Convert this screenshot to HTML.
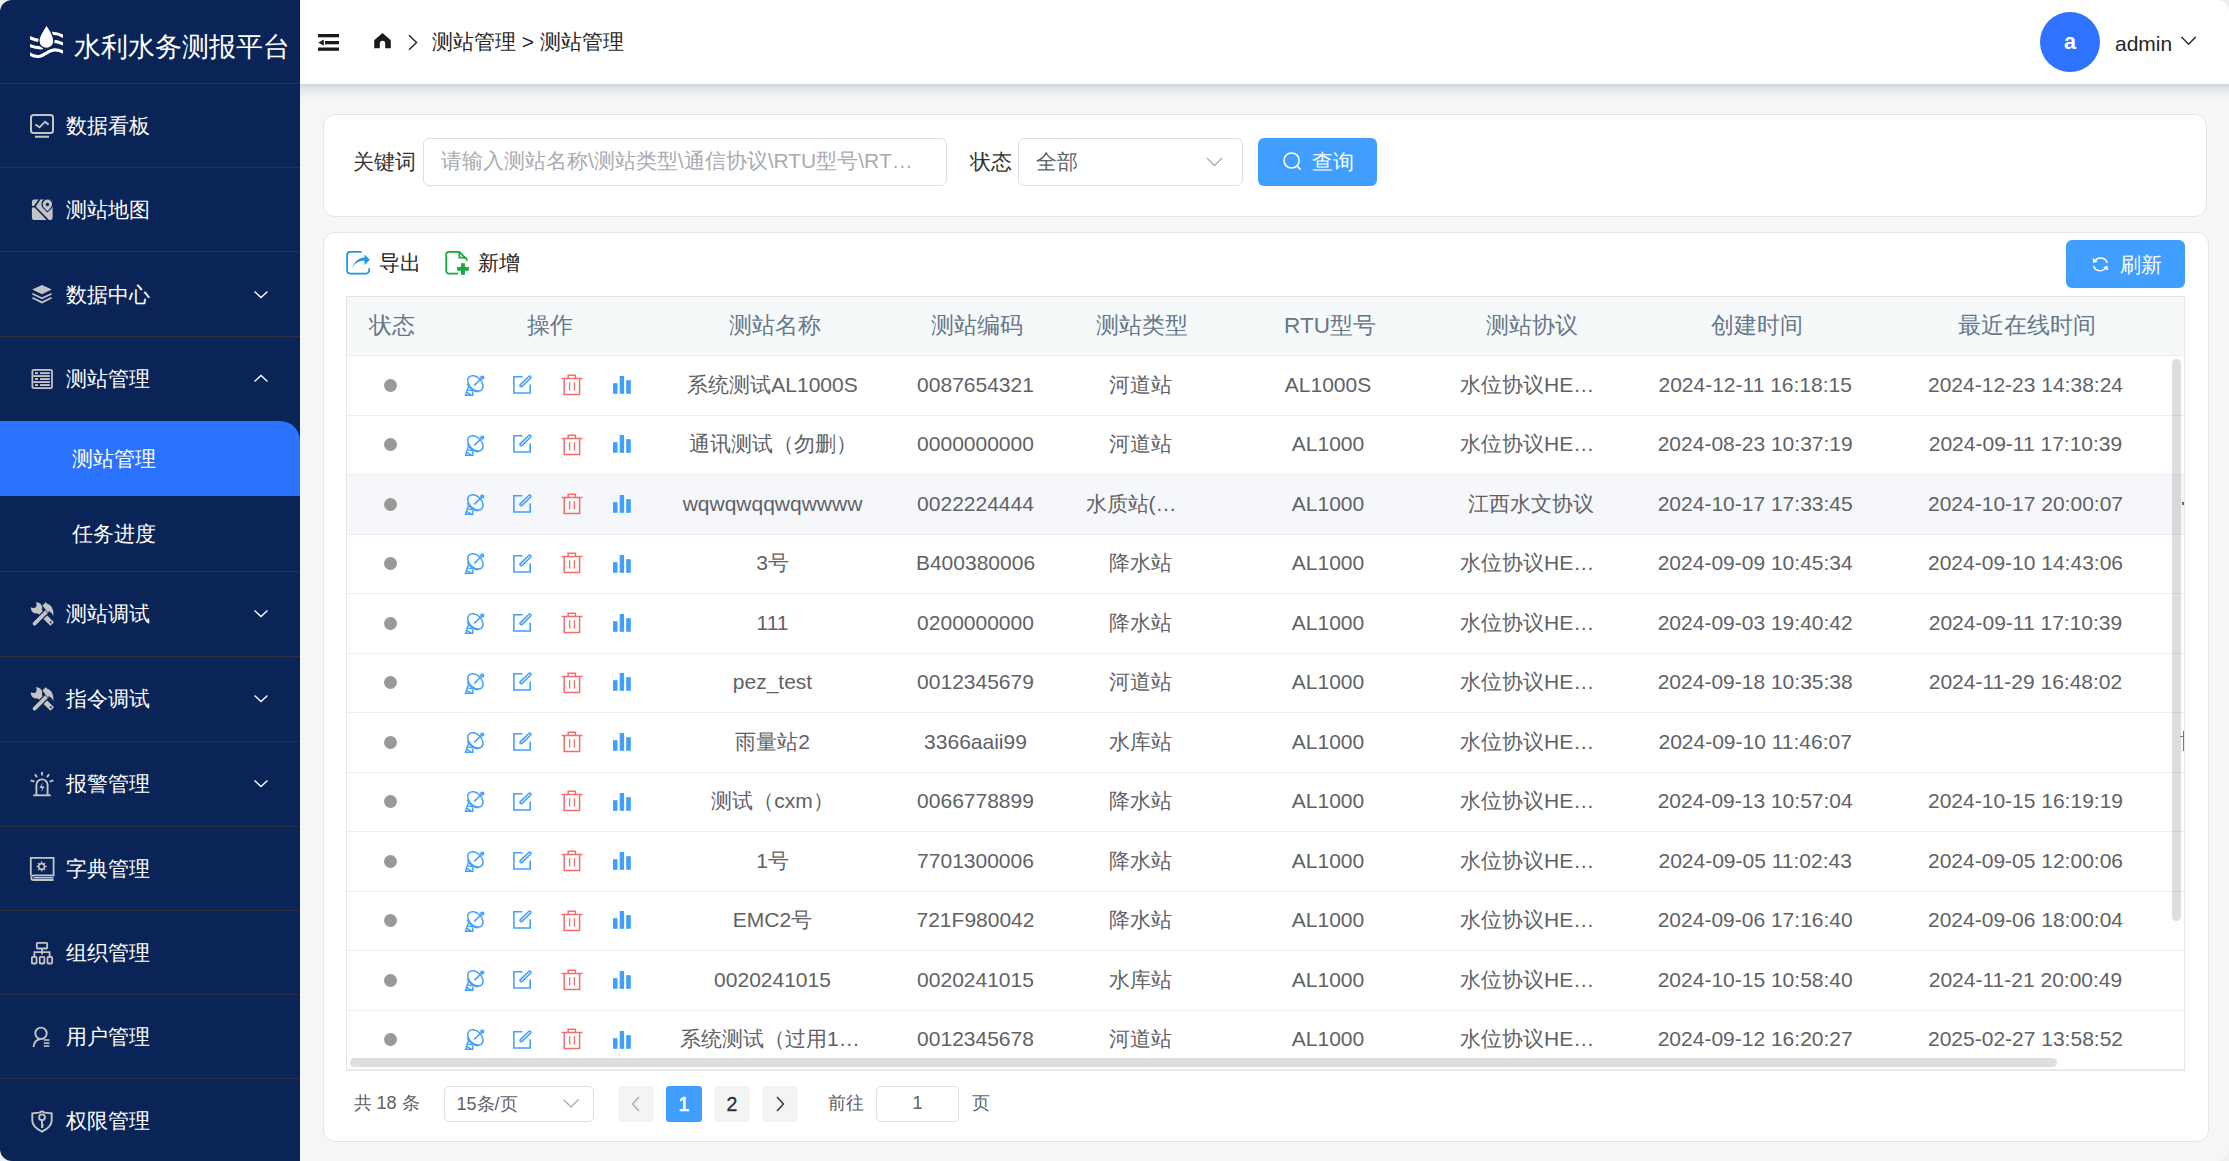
<!DOCTYPE html><html><head><meta charset='utf-8'><style>
html,body{margin:0;padding:0}
body{width:2229px;height:1161px;overflow:hidden;position:relative;background:#eef0f2;font-family:'Liberation Sans',sans-serif;}
</style></head><body>
<div style='position:absolute;left:0;top:0;width:2229px;height:1161px;border-radius:12px;overflow:hidden;background:#f5f6f8'>
<div style='position:absolute;left:0px;top:0px;width:300px;height:1161px;background:#0a2457'></div>
<svg style='position:absolute;left:26px;top:20px' width='44' height='44' viewBox='0 0 44 44'><defs><clipPath id='lc'><rect x='4' y='0' width='33' height='44'/></clipPath></defs>
<g fill='none' stroke='#fff' stroke-width='3.1' clip-path='url(#lc)'>
<path d='M2 16.6 Q 7.5 19.8 14 20.6'/>
<path d='M2 24.6 Q 8.5 28.4 17 27.8'/>
<path d='M2 32.6 C 6 36 10 37.2 14 36.2 C 19 35 23 30 29 29.9 C 32 29.9 35 30.8 39 33.2'/>
<path d='M24 13.4 C 29 12.8 34 14 39 17.4'/>
<path d='M26 21.3 C 30 21.2 34 22.2 39 24.8'/>
</g>
<path d='M20.6 4.6 C 17 10.5 12.9 15 12.9 20.9 A 7.5 7.5 0 0 0 27.9 20.9 C 27.9 15 24.2 10.5 20.6 4.6 Z' fill='#fff' stroke='#0a2457' stroke-width='1.4'/>
</svg>
<div style='position:absolute;left:74px;top:26.5px;height:40px;line-height:40px;font-size:27px;color:#fff;white-space:nowrap;'>水利水务测报平台</div>
<div style='position:absolute;left:0px;top:83px;width:300px;height:1px;background:#2a2f3e'></div>
<div style='position:absolute;left:0px;top:167px;width:300px;height:1px;background:#2a2f3e'></div>
<div style='position:absolute;left:0px;top:251px;width:300px;height:1px;background:#2a2f3e'></div>
<div style='position:absolute;left:0px;top:336px;width:300px;height:1px;background:#2a2f3e'></div>
<div style='position:absolute;left:0px;top:571px;width:300px;height:1px;background:#2a2f3e'></div>
<div style='position:absolute;left:0px;top:656px;width:300px;height:1px;background:#2a2f3e'></div>
<div style='position:absolute;left:0px;top:741px;width:300px;height:1px;background:#2a2f3e'></div>
<div style='position:absolute;left:0px;top:826px;width:300px;height:1px;background:#2a2f3e'></div>
<div style='position:absolute;left:0px;top:910px;width:300px;height:1px;background:#2a2f3e'></div>
<div style='position:absolute;left:0px;top:994px;width:300px;height:1px;background:#2a2f3e'></div>
<div style='position:absolute;left:0px;top:1078px;width:300px;height:1px;background:#2a2f3e'></div>
<div style='position:absolute;left:66px;top:106.0px;height:40px;line-height:40px;font-size:21px;color:#fff;white-space:nowrap;'>数据看板</div>
<div style='position:absolute;left:66px;top:190.0px;height:40px;line-height:40px;font-size:21px;color:#fff;white-space:nowrap;'>测站地图</div>
<div style='position:absolute;left:66px;top:274.5px;height:40px;line-height:40px;font-size:21px;color:#fff;white-space:nowrap;'>数据中心</div>
<svg style='position:absolute;left:253px;top:290px' width='16' height='9' viewBox='0 0 16 9'><path d='M1.5 1.5 L8 7.5 L14.5 1.5' fill='none' stroke='#fff' stroke-width='1.4'/></svg>
<div style='position:absolute;left:66px;top:359.0px;height:40px;line-height:40px;font-size:21px;color:#fff;white-space:nowrap;'>测站管理</div>
<svg style='position:absolute;left:253px;top:374px' width='16' height='9' viewBox='0 0 16 9'><path d='M1.5 7.5 L8 1.5 L14.5 7.5' fill='none' stroke='#fff' stroke-width='1.4'/></svg>
<div style='position:absolute;left:66px;top:594.0px;height:40px;line-height:40px;font-size:21px;color:#fff;white-space:nowrap;'>测站调试</div>
<svg style='position:absolute;left:253px;top:609px' width='16' height='9' viewBox='0 0 16 9'><path d='M1.5 1.5 L8 7.5 L14.5 1.5' fill='none' stroke='#fff' stroke-width='1.4'/></svg>
<div style='position:absolute;left:66px;top:679.0px;height:40px;line-height:40px;font-size:21px;color:#fff;white-space:nowrap;'>指令调试</div>
<svg style='position:absolute;left:253px;top:694px' width='16' height='9' viewBox='0 0 16 9'><path d='M1.5 1.5 L8 7.5 L14.5 1.5' fill='none' stroke='#fff' stroke-width='1.4'/></svg>
<div style='position:absolute;left:66px;top:764.0px;height:40px;line-height:40px;font-size:21px;color:#fff;white-space:nowrap;'>报警管理</div>
<svg style='position:absolute;left:253px;top:779px' width='16' height='9' viewBox='0 0 16 9'><path d='M1.5 1.5 L8 7.5 L14.5 1.5' fill='none' stroke='#fff' stroke-width='1.4'/></svg>
<div style='position:absolute;left:66px;top:848.5px;height:40px;line-height:40px;font-size:21px;color:#fff;white-space:nowrap;'>字典管理</div>
<div style='position:absolute;left:66px;top:932.5px;height:40px;line-height:40px;font-size:21px;color:#fff;white-space:nowrap;'>组织管理</div>
<div style='position:absolute;left:66px;top:1016.5px;height:40px;line-height:40px;font-size:21px;color:#fff;white-space:nowrap;'>用户管理</div>
<div style='position:absolute;left:66px;top:1100.5px;height:40px;line-height:40px;font-size:21px;color:#fff;white-space:nowrap;'>权限管理</div>
<div style='position:absolute;left:0px;top:421px;width:300px;height:75px;background:#2b72ff;border-top-right-radius:20px'></div>
<div style='position:absolute;left:72px;top:439.0px;height:40px;line-height:40px;font-size:21px;color:#fff;white-space:nowrap;'>测站管理</div>
<div style='position:absolute;left:72px;top:514.0px;height:40px;line-height:40px;font-size:21px;color:#fff;white-space:nowrap;'>任务进度</div>
<svg style='position:absolute;left:28px;top:112px' width='28' height='28' viewBox='0 0 28 28'><g fill='none' stroke='#c4c4c4' stroke-width='2'>
<rect x='3' y='3' width='22' height='18' rx='2.5'/>
<path d='M7.4 12.5 L11.5 15.3 L17.1 9.7 L20.6 12.8' stroke-width='1.9'/>
<path d='M7 24.7 H 21' stroke-width='2'/></g></svg>
<svg style='position:absolute;left:30px;top:198px' width='24' height='24' viewBox='0 0 24 24'><rect x='1.9' y='1.6' width='20.7' height='20.4' rx='2.2' fill='#c4c4c4'/>
<path d='M9.8 1 L4.7 8.5 L18.4 22.6' fill='none' stroke='#0a2457' stroke-width='1.6'/>
<path d='M1 9 L4.7 8.5' fill='none' stroke='#0a2457' stroke-width='1.4'/>
<path d='M17.4 14.5 L12.8 10 A 6 6 0 1 1 22 10 Z' fill='#0a2457'/>
<path d='M17.4 13.2 L13.9 9.4 A 4.7 4.7 0 1 1 20.9 9.4 Z' fill='#c4c4c4'/>
<circle cx='17.4' cy='6.5' r='1.7' fill='#0a2457'/></svg>
<svg style='position:absolute;left:30px;top:282px' width='24' height='24' viewBox='0 0 24 24'><path d='M12 3 L21.8 7.6 L12 12.2 L2.2 7.6 Z' fill='#c4c4c4'/>
<path d='M2.4 11.7 L12 16.3 L21.6 11.7 M2.4 15.8 L12 20.4 L21.6 15.8' fill='none' stroke='#c4c4c4' stroke-width='1.8'/></svg>
<svg style='position:absolute;left:30px;top:367px' width='24' height='24' viewBox='0 0 24 24'><g fill='#c4c4c4'><rect x='1.5' y='2' width='21.4' height='20' rx='2.2'/></g>
<rect x='3.3' y='3.8' width='17.8' height='16.4' fill='#0a2457'/>
<g fill='#c4c4c4'>
<rect x='5' y='5.2' width='3' height='1.9'/><rect x='10' y='5.2' width='9.8' height='1.9'/>
<rect x='3.3' y='8.1' width='16.5' height='1.9'/>
<rect x='5' y='11.1' width='3' height='1.9'/><rect x='10' y='11.1' width='9.8' height='1.9'/>
<rect x='3.3' y='14.1' width='16.5' height='1.9'/>
<rect x='5' y='17.1' width='3' height='1.9'/><rect x='10' y='17.1' width='9.8' height='1.9'/>
</g></svg>
<svg style='position:absolute;left:30px;top:601px' width='25' height='25' viewBox='0 0 25 25'><g fill='#c4c4c4'>
<circle cx='6.5' cy='6.9' r='5.7'/>
<path d='M4.6 9.2 L8.4 5.4 L24 21.2 L20.4 24.8 Z'/>
</g>
<circle cx='3.4' cy='3.8' r='3.2' fill='#0a2457'/>
<circle cx='20.7' cy='21.3' r='0.95' fill='#0a2457'/>
<path d='M18.4 8.9 L4.6 22.6' stroke='#0a2457' stroke-width='6.2' stroke-linecap='round'/>
<path d='M18.4 8.9 L4.6 22.6' stroke='#c4c4c4' stroke-width='3.7' stroke-linecap='round'/>
<path d='M12.0 4.5 L15.7 0.9 L17.4 2.5 C 21.6 3.8 24.6 8.2 23.6 16.6 C 22.6 13.4 21 11.4 18.9 10.6 L 17.6 11.8 Z' fill='#c4c4c4' stroke='#0a2457' stroke-width='0.7'/>
</svg>
<svg style='position:absolute;left:30px;top:686px' width='25' height='25' viewBox='0 0 25 25'><g fill='#c4c4c4'>
<circle cx='6.5' cy='6.9' r='5.7'/>
<path d='M4.6 9.2 L8.4 5.4 L24 21.2 L20.4 24.8 Z'/>
</g>
<circle cx='3.4' cy='3.8' r='3.2' fill='#0a2457'/>
<circle cx='20.7' cy='21.3' r='0.95' fill='#0a2457'/>
<path d='M18.4 8.9 L4.6 22.6' stroke='#0a2457' stroke-width='6.2' stroke-linecap='round'/>
<path d='M18.4 8.9 L4.6 22.6' stroke='#c4c4c4' stroke-width='3.7' stroke-linecap='round'/>
<path d='M12.0 4.5 L15.7 0.9 L17.4 2.5 C 21.6 3.8 24.6 8.2 23.6 16.6 C 22.6 13.4 21 11.4 18.9 10.6 L 17.6 11.8 Z' fill='#c4c4c4' stroke='#0a2457' stroke-width='0.7'/>
</svg>
<svg style='position:absolute;left:29px;top:771px' width='26' height='26' viewBox='0 0 26 26'><g fill='none' stroke='#c4c4c4' stroke-width='1.9'>
<path d='M7.4 24 V 14 A 5.6 5.6 0 0 1 18.6 14 V 24'/>
<path d='M4.2 24.3 H 21.8'/>
<path d='M13 1 V 4.5 M6 3.2 L8 6.3 M20 3.2 L18 6.3 M1.6 9.4 L5.4 10.6 M24.4 9.4 L20.6 10.6'/>
</g><path d='M13.8 11.5 L10.4 17 H 13.2 L12.2 21 L15.6 15.6 H 12.8 Z' fill='#c4c4c4'/></svg>
<svg style='position:absolute;left:29px;top:856px' width='26' height='26' viewBox='0 0 26 26'><g fill='none' stroke='#c4c4c4' stroke-width='1.8'>
<path d='M1.8 19.5 V 1.9 H 24.6 V 19.4 H 4.6 A 2.3 2.3 0 0 0 4.6 24 H 24.6'/>
<path d='M4.6 21.7 H 24.6' stroke-width='1.6'/>
<circle cx='12.6' cy='10.5' r='2.9' stroke-width='1.6'/>
<path d='M12.6 5.6 V 7 M12.6 14 V 15.4 M7.7 10.5 H 9.1 M16.1 10.5 H 17.5 M9.1 7 L10 7.9 M15.2 13.1 L16.1 14 M16.1 7 L15.2 7.9 M10 13.1 L9.1 14' stroke-width='1.3'/>
</g></svg>
<svg style='position:absolute;left:30px;top:941px' width='24' height='24' viewBox='0 0 24 24'><g fill='none' stroke='#c4c4c4' stroke-width='1.8'>
<rect x='6.8' y='1.9' width='10.4' height='5.6' rx='0.8'/>
<path d='M12 7.5 V 13.5 M4.4 16.5 V 11.2 H 19.6 V 16.5'/>
<rect x='1.9' y='15.9' width='4.6' height='6.6' rx='0.8'/>
<rect x='9.7' y='15.9' width='4.6' height='6.6' rx='0.8'/>
<rect x='17.5' y='15.9' width='4.6' height='6.6' rx='0.8'/>
</g></svg>
<svg style='position:absolute;left:30px;top:1025px' width='24' height='24' viewBox='0 0 24 24'><g fill='none' stroke='#c4c4c4' stroke-width='1.9'>
<circle cx='11' cy='8.3' r='5.7'/>
<path d='M3.5 22 C 4 17.5 6.5 14.5 10.2 14'/>
</g><g fill='#c4c4c4'><rect x='13.8' y='14.2' width='5.6' height='1.6'/><rect x='13.8' y='17.3' width='5.6' height='1.6'/><rect x='13.8' y='20.2' width='5.6' height='1.6'/></g></svg>
<svg style='position:absolute;left:30px;top:1109px' width='24' height='24' viewBox='0 0 24 24'><g fill='none' stroke='#c4c4c4' stroke-width='1.9'>
<path d='M12 2.3 L14.8 3.6 L21.7 4.4 V 11.5 C 21.7 16.8 16.8 20.3 12 22.6 C 7.2 20.3 2.3 16.8 2.3 11.5 V 4.4 L9.2 3.6 Z'/>
<circle cx='12' cy='8.3' r='2.9'/>
<path d='M12 11.2 V 19'/><path d='M12 15.6 L13.6 16.3 M12 18 L13.3 17.5' stroke-width='1.5'/>
</g></svg>
<div style='position:absolute;left:300px;top:0px;width:1929px;height:84px;background:#fff'></div>
<div style='position:absolute;left:300px;top:84px;width:1929px;height:15px;background:linear-gradient(#d3d7db,#e2e5e8 35%,#f5f6f8)'></div>
<svg style='position:absolute;left:318px;top:33px' width='22' height='19' viewBox='0 0 22 19'><g fill='#1a1a1a'><rect x='0' y='1' width='21' height='3.3'/><rect x='7' y='8' width='14' height='3.3'/><rect x='0' y='14.5' width='21' height='3.3'/>
<path d='M0.3 9.6 L5.8 6.4 V 12.8 Z'/></g></svg>
<svg style='position:absolute;left:373px;top:32px' width='19' height='18' viewBox='0 0 19 18'><path d='M9.5 1 L17.8 8.2 V 16.3 H 12.2 V 11.5 A 2.7 2.7 0 0 0 6.8 11.5 V 16.3 H 1.2 V 8.2 Z' fill='#1a1a1a'/></svg>
<svg style='position:absolute;left:407px;top:34px' width='12' height='17' viewBox='0 0 12 17'><path d='M2 1.2 L9.5 8.5 L2 15.8' fill='none' stroke='#2a2a2a' stroke-width='1.5'/></svg>
<div style='position:absolute;left:432px;top:22.1px;height:40px;line-height:40px;font-size:21px;color:#262626;white-space:nowrap;'>测站管理 &gt; 测站管理</div>
<div style='position:absolute;left:2040px;top:12px;width:60px;height:60px;background:#2d73ff;border-radius:50%'></div>
<div style='position:absolute;left:2040.0px;top:22.0px;width:60px;height:40px;line-height:40px;text-align:center;font-size:21.5px;color:#fff;white-space:nowrap;font-weight:bold'>a</div>
<div style='position:absolute;left:2115px;top:24.0px;height:40px;line-height:40px;font-size:21px;color:#262626;white-space:nowrap;'>admin</div>
<svg style='position:absolute;left:2180px;top:35px' width='18' height='12' viewBox='0 0 18 12'><path d='M1.5 2 L8.6 9.2 L15.7 2' fill='none' stroke='#2a2a2a' stroke-width='1.5'/></svg>
<div style='position:absolute;left:323px;top:114px;width:1884px;height:103px;background:#fff;border:1px solid #e5e5e6;border-radius:12px;box-sizing:border-box'></div>
<div style='position:absolute;left:353px;top:142.3px;height:40px;line-height:40px;font-size:21px;color:#303133;white-space:nowrap;'>关键词</div>
<div style='position:absolute;left:423px;top:138px;width:524px;height:48px;border:1px solid #dcdfe6;border-radius:6px;box-sizing:border-box;background:#fff'></div>
<div style='position:absolute;left:441px;top:141.1px;height:40px;line-height:40px;font-size:21px;color:#a8abb2;white-space:nowrap;'>请输入测站名称\测站类型\通信协议\RTU型号\RT…</div>
<div style='position:absolute;left:970px;top:141.5px;height:40px;line-height:40px;font-size:21px;color:#303133;white-space:nowrap;'>状态</div>
<div style='position:absolute;left:1018px;top:138px;width:225px;height:48px;border:1px solid #dcdfe6;border-radius:6px;box-sizing:border-box;background:#fff'></div>
<div style='position:absolute;left:1036px;top:141.5px;height:40px;line-height:40px;font-size:21px;color:#606266;white-space:nowrap;'>全部</div>
<svg style='position:absolute;left:1205px;top:155px' width='19' height='13' viewBox='0 0 19 13'><path d='M2 3 L9.5 10.5 L17 3' fill='none' stroke='#a8abb2' stroke-width='1.3'/></svg>
<div style='position:absolute;left:1258px;top:138px;width:119px;height:48px;background:#409eff;border-radius:6px'></div>
<svg style='position:absolute;left:1281px;top:150px' width='22' height='22' viewBox='0 0 22 22'><circle cx='10.6' cy='10.5' r='7.6' fill='none' stroke='#fff' stroke-width='1.5'/><path d='M16 16 L19.6 19.6' stroke='#fff' stroke-width='1.6'/></svg>
<div style='position:absolute;left:1312px;top:141.5px;height:40px;line-height:40px;font-size:21px;color:#fff;white-space:nowrap;'>查询</div>
<div style='position:absolute;left:323px;top:232px;width:1886px;height:910px;background:#fff;border:1px solid #e5e5e6;border-radius:12px;box-sizing:border-box'></div>
<svg style='position:absolute;left:345px;top:250px' width='26' height='26' viewBox='0 0 26 26'><path d='M16.7 1.9 H 5 A 3 3 0 0 0 2.1 4.9 V 20.6 A 3 3 0 0 0 5 23.6 H 21.2 A 3 3 0 0 0 24.2 20.6 V 18.2' fill='none' stroke='#1b9ae6' stroke-width='1.8'/>
<path d='M7.2 17.9 C 9 12.5 13 8 19.5 7.6 V 4.4 L 24.8 9.8 L 19.5 15.1 V 10.7 C 14 10.5 10 13 7.2 17.9 Z' fill='#1b9ae6'/></svg>
<div style='position:absolute;left:379px;top:243.0px;height:40px;line-height:40px;font-size:21px;color:#262626;white-space:nowrap;'>导出</div>
<svg style='position:absolute;left:444px;top:250px' width='26' height='26' viewBox='0 0 26 26'><g fill='none' stroke='#17ab3d' stroke-width='1.8'>
<path d='M14.1 23.6 H 5 A 2.8 2.8 0 0 1 2.2 20.8 V 4.7 A 2.8 2.8 0 0 1 5 1.9 H 15.3 L 22.9 9.5 V 10.7'/>
<path d='M15.3 2 V 7.6 H 22.4' stroke-width='1.7'/>
</g><g fill='#17ab3d'><rect x='17' y='13.2' width='3.9' height='11.6'/><rect x='13.1' y='17' width='11.7' height='3.75'/></g></svg>
<div style='position:absolute;left:478px;top:243.0px;height:40px;line-height:40px;font-size:21px;color:#262626;white-space:nowrap;'>新增</div>
<div style='position:absolute;left:2066px;top:240px;width:119px;height:48px;background:#409eff;border-radius:6px'></div>
<svg style='position:absolute;left:2090px;top:254px' width='21' height='21' viewBox='0 0 21 21'><g fill='none' stroke='#fff' stroke-width='1.5'>
<path d='M4.5 7.6 A 6.9 6.9 0 0 1 17.2 8.8'/><path d='M16.3 12.8 A 6.9 6.9 0 0 1 3.5 12'/></g>
<path d='M2.6 4 L3.2 9 L7.8 7.4 Z M18 16.5 L17.5 11.6 L13 13.4 Z' fill='#fff'/></svg>
<div style='position:absolute;left:2120px;top:245.0px;height:40px;line-height:40px;font-size:21px;color:#fff;white-space:nowrap;'>刷新</div>
<div style='position:absolute;left:346px;top:296px;width:1839px;height:775px;border:1px solid #e5e5e5;border-bottom:none;box-sizing:border-box;background:#fff'></div>
<div style='position:absolute;left:347px;top:297px;width:1837px;height:58px;background:#f6f9f9'></div>
<div style='position:absolute;left:347px;top:355px;width:1837px;height:1px;background:#ebeef5'></div>
<div style='position:absolute;left:262.0px;top:305.5px;width:260px;height:40px;line-height:40px;text-align:center;font-size:22.5px;color:#66788a;white-space:nowrap;'>状态</div>
<div style='position:absolute;left:419.79999999999995px;top:305.5px;width:260px;height:40px;line-height:40px;text-align:center;font-size:22.5px;color:#66788a;white-space:nowrap;'>操作</div>
<div style='position:absolute;left:644.5px;top:305.5px;width:260px;height:40px;line-height:40px;text-align:center;font-size:22.5px;color:#66788a;white-space:nowrap;'>测站名称</div>
<div style='position:absolute;left:846.9px;top:305.5px;width:260px;height:40px;line-height:40px;text-align:center;font-size:22.5px;color:#66788a;white-space:nowrap;'>测站编码</div>
<div style='position:absolute;left:1012.0px;top:305.5px;width:260px;height:40px;line-height:40px;text-align:center;font-size:22.5px;color:#66788a;white-space:nowrap;'>测站类型</div>
<div style='position:absolute;left:1200.0px;top:305.5px;width:260px;height:40px;line-height:40px;text-align:center;font-size:22.5px;color:#66788a;white-space:nowrap;'>RTU型号</div>
<div style='position:absolute;left:1402.0px;top:305.5px;width:260px;height:40px;line-height:40px;text-align:center;font-size:22.5px;color:#66788a;white-space:nowrap;'>测站协议</div>
<div style='position:absolute;left:1626.7px;top:305.5px;width:260px;height:40px;line-height:40px;text-align:center;font-size:22.5px;color:#66788a;white-space:nowrap;'>创建时间</div>
<div style='position:absolute;left:1897.0px;top:305.5px;width:260px;height:40px;line-height:40px;text-align:center;font-size:22.5px;color:#66788a;white-space:nowrap;'>最近在线时间</div>
<div style='position:absolute;left:347px;top:415px;width:1837px;height:1px;background:#ebeef5'></div>
<div style='position:absolute;left:384px;top:378.9px;width:13px;height:13.0px;background:#999;border-radius:50%'></div>
<svg style='position:absolute;left:464px;top:374px' width='22' height='23' viewBox='0 0 22 23'><g fill='none' stroke='#409eff' stroke-width='1.5'>
<ellipse cx='11.4' cy='9.4' rx='9' ry='6.1' transform='rotate(45 11.4 9.4)'/>
<path d='M3.4 9.8 C 4.6 13.6 9 17.6 14.6 17.8' stroke-width='1.4'/>
<path d='M10.3 11.4 L16.8 5'/><circle cx='18.3' cy='3.6' r='1.3' stroke-width='1.7'/>
<path d='M4.3 12.8 L1.5 21.2 H 8.8 V 17.8 M3.4 15.9 L 9.4 16.9 M 2.8 18.4 L 7.2 21' stroke-width='1.4'/>
</g></svg>
<svg style='position:absolute;left:512px;top:375px' width='21' height='21' viewBox='0 0 21 21'><g fill='none' stroke='#409eff' stroke-width='1.55'>
<path d='M10.5 1.8 H 1.9 V 17.9 H 18.2 V 9.5'/>
<rect x='6.4' y='5.25' width='14.1' height='2.4' rx='1.2' transform='rotate(-44 13.45 6.45)' stroke-width='1.5'/>
</g></svg>
<svg style='position:absolute;left:561px;top:374px' width='22' height='22' viewBox='0 0 22 22'><g fill='none' stroke='#f56c6c' stroke-width='1.5'>
<path d='M0.6 4.5 H 21.4'/><path d='M7.2 4.3 V 1.3 H 14.4 V 4.3'/>
<path d='M3.2 4.5 V 20.6 H 18.6 V 4.5'/>
<path d='M8.6 8.2 V 16.4 M13.4 8.2 V 16.4' stroke-width='1.3'/>
</g></svg>
<svg style='position:absolute;left:612px;top:375px' width='20' height='20' viewBox='0 0 20 20'><g fill='#409eff'><rect x='1' y='8.2' width='4.5' height='10.6'/><rect x='7.7' y='1' width='4.4' height='17.8'/><rect x='14.2' y='5.2' width='4.6' height='13.6'/></g></svg>
<div style='position:absolute;left:632.5px;top:364.7px;width:280px;height:40px;line-height:40px;text-align:center;font-size:21px;color:#606266;white-space:nowrap;'>系统测试AL1000S</div>
<div style='position:absolute;left:835.5px;top:364.7px;width:280px;height:40px;line-height:40px;text-align:center;font-size:21px;color:#606266;white-space:nowrap;'>0087654321</div>
<div style='position:absolute;left:1000.5px;top:364.7px;width:280px;height:40px;line-height:40px;text-align:center;font-size:21px;color:#606266;white-space:nowrap;'>河道站</div>
<div style='position:absolute;left:1188.0px;top:364.7px;width:280px;height:40px;line-height:40px;text-align:center;font-size:21px;color:#606266;white-space:nowrap;'>AL1000S</div>
<div style='position:absolute;left:1460px;top:364.7px;height:40px;line-height:40px;font-size:21px;color:#606266;white-space:nowrap;'>水位协议HE…</div>
<div style='position:absolute;left:1615.2px;top:364.7px;width:280px;height:40px;line-height:40px;text-align:center;font-size:21px;color:#606266;white-space:nowrap;'>2024-12-11 16:18:15</div>
<div style='position:absolute;left:1885.5px;top:364.7px;width:280px;height:40px;line-height:40px;text-align:center;font-size:21px;color:#606266;white-space:nowrap;'>2024-12-23 14:38:24</div>
<div style='position:absolute;left:347px;top:474px;width:1837px;height:1px;background:#ebeef5'></div>
<div style='position:absolute;left:384px;top:438.4px;width:13px;height:13.0px;background:#999;border-radius:50%'></div>
<svg style='position:absolute;left:464px;top:434px' width='22' height='23' viewBox='0 0 22 23'><g fill='none' stroke='#409eff' stroke-width='1.5'>
<ellipse cx='11.4' cy='9.4' rx='9' ry='6.1' transform='rotate(45 11.4 9.4)'/>
<path d='M3.4 9.8 C 4.6 13.6 9 17.6 14.6 17.8' stroke-width='1.4'/>
<path d='M10.3 11.4 L16.8 5'/><circle cx='18.3' cy='3.6' r='1.3' stroke-width='1.7'/>
<path d='M4.3 12.8 L1.5 21.2 H 8.8 V 17.8 M3.4 15.9 L 9.4 16.9 M 2.8 18.4 L 7.2 21' stroke-width='1.4'/>
</g></svg>
<svg style='position:absolute;left:512px;top:434px' width='21' height='21' viewBox='0 0 21 21'><g fill='none' stroke='#409eff' stroke-width='1.55'>
<path d='M10.5 1.8 H 1.9 V 17.9 H 18.2 V 9.5'/>
<rect x='6.4' y='5.25' width='14.1' height='2.4' rx='1.2' transform='rotate(-44 13.45 6.45)' stroke-width='1.5'/>
</g></svg>
<svg style='position:absolute;left:561px;top:434px' width='22' height='22' viewBox='0 0 22 22'><g fill='none' stroke='#f56c6c' stroke-width='1.5'>
<path d='M0.6 4.5 H 21.4'/><path d='M7.2 4.3 V 1.3 H 14.4 V 4.3'/>
<path d='M3.2 4.5 V 20.6 H 18.6 V 4.5'/>
<path d='M8.6 8.2 V 16.4 M13.4 8.2 V 16.4' stroke-width='1.3'/>
</g></svg>
<svg style='position:absolute;left:612px;top:434px' width='20' height='20' viewBox='0 0 20 20'><g fill='#409eff'><rect x='1' y='8.2' width='4.5' height='10.6'/><rect x='7.7' y='1' width='4.4' height='17.8'/><rect x='14.2' y='5.2' width='4.6' height='13.6'/></g></svg>
<div style='position:absolute;left:632.5px;top:424.2px;width:280px;height:40px;line-height:40px;text-align:center;font-size:21px;color:#606266;white-space:nowrap;'>通讯测试（勿删）</div>
<div style='position:absolute;left:835.5px;top:424.2px;width:280px;height:40px;line-height:40px;text-align:center;font-size:21px;color:#606266;white-space:nowrap;'>0000000000</div>
<div style='position:absolute;left:1000.5px;top:424.2px;width:280px;height:40px;line-height:40px;text-align:center;font-size:21px;color:#606266;white-space:nowrap;'>河道站</div>
<div style='position:absolute;left:1188.0px;top:424.2px;width:280px;height:40px;line-height:40px;text-align:center;font-size:21px;color:#606266;white-space:nowrap;'>AL1000</div>
<div style='position:absolute;left:1460px;top:424.2px;height:40px;line-height:40px;font-size:21px;color:#606266;white-space:nowrap;'>水位协议HE…</div>
<div style='position:absolute;left:1615.2px;top:424.2px;width:280px;height:40px;line-height:40px;text-align:center;font-size:21px;color:#606266;white-space:nowrap;'>2024-08-23 10:37:19</div>
<div style='position:absolute;left:1885.5px;top:424.2px;width:280px;height:40px;line-height:40px;text-align:center;font-size:21px;color:#606266;white-space:nowrap;'>2024-09-11 17:10:39</div>
<div style='position:absolute;left:347px;top:475px;width:1837px;height:59px;background:#f5f7fa'></div>
<div style='position:absolute;left:347px;top:534px;width:1837px;height:1px;background:#ebeef5'></div>
<div style='position:absolute;left:384px;top:497.9px;width:13px;height:13.0px;background:#999;border-radius:50%'></div>
<svg style='position:absolute;left:464px;top:493px' width='22' height='23' viewBox='0 0 22 23'><g fill='none' stroke='#409eff' stroke-width='1.5'>
<ellipse cx='11.4' cy='9.4' rx='9' ry='6.1' transform='rotate(45 11.4 9.4)'/>
<path d='M3.4 9.8 C 4.6 13.6 9 17.6 14.6 17.8' stroke-width='1.4'/>
<path d='M10.3 11.4 L16.8 5'/><circle cx='18.3' cy='3.6' r='1.3' stroke-width='1.7'/>
<path d='M4.3 12.8 L1.5 21.2 H 8.8 V 17.8 M3.4 15.9 L 9.4 16.9 M 2.8 18.4 L 7.2 21' stroke-width='1.4'/>
</g></svg>
<svg style='position:absolute;left:512px;top:494px' width='21' height='21' viewBox='0 0 21 21'><g fill='none' stroke='#409eff' stroke-width='1.55'>
<path d='M10.5 1.8 H 1.9 V 17.9 H 18.2 V 9.5'/>
<rect x='6.4' y='5.25' width='14.1' height='2.4' rx='1.2' transform='rotate(-44 13.45 6.45)' stroke-width='1.5'/>
</g></svg>
<svg style='position:absolute;left:561px;top:493px' width='22' height='22' viewBox='0 0 22 22'><g fill='none' stroke='#f56c6c' stroke-width='1.5'>
<path d='M0.6 4.5 H 21.4'/><path d='M7.2 4.3 V 1.3 H 14.4 V 4.3'/>
<path d='M3.2 4.5 V 20.6 H 18.6 V 4.5'/>
<path d='M8.6 8.2 V 16.4 M13.4 8.2 V 16.4' stroke-width='1.3'/>
</g></svg>
<svg style='position:absolute;left:612px;top:494px' width='20' height='20' viewBox='0 0 20 20'><g fill='#409eff'><rect x='1' y='8.2' width='4.5' height='10.6'/><rect x='7.7' y='1' width='4.4' height='17.8'/><rect x='14.2' y='5.2' width='4.6' height='13.6'/></g></svg>
<div style='position:absolute;left:632.5px;top:483.7px;width:280px;height:40px;line-height:40px;text-align:center;font-size:21px;color:#606266;white-space:nowrap;'>wqwqwqqwqwwww</div>
<div style='position:absolute;left:835.5px;top:483.7px;width:280px;height:40px;line-height:40px;text-align:center;font-size:21px;color:#606266;white-space:nowrap;'>0022224444</div>
<div style='position:absolute;left:1085.5px;top:483.7px;height:40px;line-height:40px;font-size:21px;color:#606266;white-space:nowrap;'>水质站(…</div>
<div style='position:absolute;left:1188.0px;top:483.7px;width:280px;height:40px;line-height:40px;text-align:center;font-size:21px;color:#606266;white-space:nowrap;'>AL1000</div>
<div style='position:absolute;left:1390.5px;top:483.7px;width:280px;height:40px;line-height:40px;text-align:center;font-size:21px;color:#606266;white-space:nowrap;'>江西水文协议</div>
<div style='position:absolute;left:1615.2px;top:483.7px;width:280px;height:40px;line-height:40px;text-align:center;font-size:21px;color:#606266;white-space:nowrap;'>2024-10-17 17:33:45</div>
<div style='position:absolute;left:1885.5px;top:483.7px;width:280px;height:40px;line-height:40px;text-align:center;font-size:21px;color:#606266;white-space:nowrap;'>2024-10-17 20:00:07</div>
<div style='position:absolute;left:347px;top:593px;width:1837px;height:1px;background:#ebeef5'></div>
<div style='position:absolute;left:384px;top:557.4px;width:13px;height:13.0px;background:#999;border-radius:50%'></div>
<svg style='position:absolute;left:464px;top:552px' width='22' height='23' viewBox='0 0 22 23'><g fill='none' stroke='#409eff' stroke-width='1.5'>
<ellipse cx='11.4' cy='9.4' rx='9' ry='6.1' transform='rotate(45 11.4 9.4)'/>
<path d='M3.4 9.8 C 4.6 13.6 9 17.6 14.6 17.8' stroke-width='1.4'/>
<path d='M10.3 11.4 L16.8 5'/><circle cx='18.3' cy='3.6' r='1.3' stroke-width='1.7'/>
<path d='M4.3 12.8 L1.5 21.2 H 8.8 V 17.8 M3.4 15.9 L 9.4 16.9 M 2.8 18.4 L 7.2 21' stroke-width='1.4'/>
</g></svg>
<svg style='position:absolute;left:512px;top:554px' width='21' height='21' viewBox='0 0 21 21'><g fill='none' stroke='#409eff' stroke-width='1.55'>
<path d='M10.5 1.8 H 1.9 V 17.9 H 18.2 V 9.5'/>
<rect x='6.4' y='5.25' width='14.1' height='2.4' rx='1.2' transform='rotate(-44 13.45 6.45)' stroke-width='1.5'/>
</g></svg>
<svg style='position:absolute;left:561px;top:552px' width='22' height='22' viewBox='0 0 22 22'><g fill='none' stroke='#f56c6c' stroke-width='1.5'>
<path d='M0.6 4.5 H 21.4'/><path d='M7.2 4.3 V 1.3 H 14.4 V 4.3'/>
<path d='M3.2 4.5 V 20.6 H 18.6 V 4.5'/>
<path d='M8.6 8.2 V 16.4 M13.4 8.2 V 16.4' stroke-width='1.3'/>
</g></svg>
<svg style='position:absolute;left:612px;top:554px' width='20' height='20' viewBox='0 0 20 20'><g fill='#409eff'><rect x='1' y='8.2' width='4.5' height='10.6'/><rect x='7.7' y='1' width='4.4' height='17.8'/><rect x='14.2' y='5.2' width='4.6' height='13.6'/></g></svg>
<div style='position:absolute;left:632.5px;top:543.2px;width:280px;height:40px;line-height:40px;text-align:center;font-size:21px;color:#606266;white-space:nowrap;'>3号</div>
<div style='position:absolute;left:835.5px;top:543.2px;width:280px;height:40px;line-height:40px;text-align:center;font-size:21px;color:#606266;white-space:nowrap;'>B400380006</div>
<div style='position:absolute;left:1000.5px;top:543.2px;width:280px;height:40px;line-height:40px;text-align:center;font-size:21px;color:#606266;white-space:nowrap;'>降水站</div>
<div style='position:absolute;left:1188.0px;top:543.2px;width:280px;height:40px;line-height:40px;text-align:center;font-size:21px;color:#606266;white-space:nowrap;'>AL1000</div>
<div style='position:absolute;left:1460px;top:543.2px;height:40px;line-height:40px;font-size:21px;color:#606266;white-space:nowrap;'>水位协议HE…</div>
<div style='position:absolute;left:1615.2px;top:543.2px;width:280px;height:40px;line-height:40px;text-align:center;font-size:21px;color:#606266;white-space:nowrap;'>2024-09-09 10:45:34</div>
<div style='position:absolute;left:1885.5px;top:543.2px;width:280px;height:40px;line-height:40px;text-align:center;font-size:21px;color:#606266;white-space:nowrap;'>2024-09-10 14:43:06</div>
<div style='position:absolute;left:347px;top:653px;width:1837px;height:1px;background:#ebeef5'></div>
<div style='position:absolute;left:384px;top:616.9px;width:13px;height:13.0px;background:#999;border-radius:50%'></div>
<svg style='position:absolute;left:464px;top:612px' width='22' height='23' viewBox='0 0 22 23'><g fill='none' stroke='#409eff' stroke-width='1.5'>
<ellipse cx='11.4' cy='9.4' rx='9' ry='6.1' transform='rotate(45 11.4 9.4)'/>
<path d='M3.4 9.8 C 4.6 13.6 9 17.6 14.6 17.8' stroke-width='1.4'/>
<path d='M10.3 11.4 L16.8 5'/><circle cx='18.3' cy='3.6' r='1.3' stroke-width='1.7'/>
<path d='M4.3 12.8 L1.5 21.2 H 8.8 V 17.8 M3.4 15.9 L 9.4 16.9 M 2.8 18.4 L 7.2 21' stroke-width='1.4'/>
</g></svg>
<svg style='position:absolute;left:512px;top:613px' width='21' height='21' viewBox='0 0 21 21'><g fill='none' stroke='#409eff' stroke-width='1.55'>
<path d='M10.5 1.8 H 1.9 V 17.9 H 18.2 V 9.5'/>
<rect x='6.4' y='5.25' width='14.1' height='2.4' rx='1.2' transform='rotate(-44 13.45 6.45)' stroke-width='1.5'/>
</g></svg>
<svg style='position:absolute;left:561px;top:612px' width='22' height='22' viewBox='0 0 22 22'><g fill='none' stroke='#f56c6c' stroke-width='1.5'>
<path d='M0.6 4.5 H 21.4'/><path d='M7.2 4.3 V 1.3 H 14.4 V 4.3'/>
<path d='M3.2 4.5 V 20.6 H 18.6 V 4.5'/>
<path d='M8.6 8.2 V 16.4 M13.4 8.2 V 16.4' stroke-width='1.3'/>
</g></svg>
<svg style='position:absolute;left:612px;top:613px' width='20' height='20' viewBox='0 0 20 20'><g fill='#409eff'><rect x='1' y='8.2' width='4.5' height='10.6'/><rect x='7.7' y='1' width='4.4' height='17.8'/><rect x='14.2' y='5.2' width='4.6' height='13.6'/></g></svg>
<div style='position:absolute;left:632.5px;top:602.7px;width:280px;height:40px;line-height:40px;text-align:center;font-size:21px;color:#606266;white-space:nowrap;'>111</div>
<div style='position:absolute;left:835.5px;top:602.7px;width:280px;height:40px;line-height:40px;text-align:center;font-size:21px;color:#606266;white-space:nowrap;'>0200000000</div>
<div style='position:absolute;left:1000.5px;top:602.7px;width:280px;height:40px;line-height:40px;text-align:center;font-size:21px;color:#606266;white-space:nowrap;'>降水站</div>
<div style='position:absolute;left:1188.0px;top:602.7px;width:280px;height:40px;line-height:40px;text-align:center;font-size:21px;color:#606266;white-space:nowrap;'>AL1000</div>
<div style='position:absolute;left:1460px;top:602.7px;height:40px;line-height:40px;font-size:21px;color:#606266;white-space:nowrap;'>水位协议HE…</div>
<div style='position:absolute;left:1615.2px;top:602.7px;width:280px;height:40px;line-height:40px;text-align:center;font-size:21px;color:#606266;white-space:nowrap;'>2024-09-03 19:40:42</div>
<div style='position:absolute;left:1885.5px;top:602.7px;width:280px;height:40px;line-height:40px;text-align:center;font-size:21px;color:#606266;white-space:nowrap;'>2024-09-11 17:10:39</div>
<div style='position:absolute;left:347px;top:712px;width:1837px;height:1px;background:#ebeef5'></div>
<div style='position:absolute;left:384px;top:676.4px;width:13px;height:13.0px;background:#999;border-radius:50%'></div>
<svg style='position:absolute;left:464px;top:672px' width='22' height='23' viewBox='0 0 22 23'><g fill='none' stroke='#409eff' stroke-width='1.5'>
<ellipse cx='11.4' cy='9.4' rx='9' ry='6.1' transform='rotate(45 11.4 9.4)'/>
<path d='M3.4 9.8 C 4.6 13.6 9 17.6 14.6 17.8' stroke-width='1.4'/>
<path d='M10.3 11.4 L16.8 5'/><circle cx='18.3' cy='3.6' r='1.3' stroke-width='1.7'/>
<path d='M4.3 12.8 L1.5 21.2 H 8.8 V 17.8 M3.4 15.9 L 9.4 16.9 M 2.8 18.4 L 7.2 21' stroke-width='1.4'/>
</g></svg>
<svg style='position:absolute;left:512px;top:672px' width='21' height='21' viewBox='0 0 21 21'><g fill='none' stroke='#409eff' stroke-width='1.55'>
<path d='M10.5 1.8 H 1.9 V 17.9 H 18.2 V 9.5'/>
<rect x='6.4' y='5.25' width='14.1' height='2.4' rx='1.2' transform='rotate(-44 13.45 6.45)' stroke-width='1.5'/>
</g></svg>
<svg style='position:absolute;left:561px;top:672px' width='22' height='22' viewBox='0 0 22 22'><g fill='none' stroke='#f56c6c' stroke-width='1.5'>
<path d='M0.6 4.5 H 21.4'/><path d='M7.2 4.3 V 1.3 H 14.4 V 4.3'/>
<path d='M3.2 4.5 V 20.6 H 18.6 V 4.5'/>
<path d='M8.6 8.2 V 16.4 M13.4 8.2 V 16.4' stroke-width='1.3'/>
</g></svg>
<svg style='position:absolute;left:612px;top:672px' width='20' height='20' viewBox='0 0 20 20'><g fill='#409eff'><rect x='1' y='8.2' width='4.5' height='10.6'/><rect x='7.7' y='1' width='4.4' height='17.8'/><rect x='14.2' y='5.2' width='4.6' height='13.6'/></g></svg>
<div style='position:absolute;left:632.5px;top:662.2px;width:280px;height:40px;line-height:40px;text-align:center;font-size:21px;color:#606266;white-space:nowrap;'>pez_test</div>
<div style='position:absolute;left:835.5px;top:662.2px;width:280px;height:40px;line-height:40px;text-align:center;font-size:21px;color:#606266;white-space:nowrap;'>0012345679</div>
<div style='position:absolute;left:1000.5px;top:662.2px;width:280px;height:40px;line-height:40px;text-align:center;font-size:21px;color:#606266;white-space:nowrap;'>河道站</div>
<div style='position:absolute;left:1188.0px;top:662.2px;width:280px;height:40px;line-height:40px;text-align:center;font-size:21px;color:#606266;white-space:nowrap;'>AL1000</div>
<div style='position:absolute;left:1460px;top:662.2px;height:40px;line-height:40px;font-size:21px;color:#606266;white-space:nowrap;'>水位协议HE…</div>
<div style='position:absolute;left:1615.2px;top:662.2px;width:280px;height:40px;line-height:40px;text-align:center;font-size:21px;color:#606266;white-space:nowrap;'>2024-09-18 10:35:38</div>
<div style='position:absolute;left:1885.5px;top:662.2px;width:280px;height:40px;line-height:40px;text-align:center;font-size:21px;color:#606266;white-space:nowrap;'>2024-11-29 16:48:02</div>
<div style='position:absolute;left:347px;top:772px;width:1837px;height:1px;background:#ebeef5'></div>
<div style='position:absolute;left:384px;top:735.9px;width:13px;height:13.0px;background:#999;border-radius:50%'></div>
<svg style='position:absolute;left:464px;top:731px' width='22' height='23' viewBox='0 0 22 23'><g fill='none' stroke='#409eff' stroke-width='1.5'>
<ellipse cx='11.4' cy='9.4' rx='9' ry='6.1' transform='rotate(45 11.4 9.4)'/>
<path d='M3.4 9.8 C 4.6 13.6 9 17.6 14.6 17.8' stroke-width='1.4'/>
<path d='M10.3 11.4 L16.8 5'/><circle cx='18.3' cy='3.6' r='1.3' stroke-width='1.7'/>
<path d='M4.3 12.8 L1.5 21.2 H 8.8 V 17.8 M3.4 15.9 L 9.4 16.9 M 2.8 18.4 L 7.2 21' stroke-width='1.4'/>
</g></svg>
<svg style='position:absolute;left:512px;top:732px' width='21' height='21' viewBox='0 0 21 21'><g fill='none' stroke='#409eff' stroke-width='1.55'>
<path d='M10.5 1.8 H 1.9 V 17.9 H 18.2 V 9.5'/>
<rect x='6.4' y='5.25' width='14.1' height='2.4' rx='1.2' transform='rotate(-44 13.45 6.45)' stroke-width='1.5'/>
</g></svg>
<svg style='position:absolute;left:561px;top:731px' width='22' height='22' viewBox='0 0 22 22'><g fill='none' stroke='#f56c6c' stroke-width='1.5'>
<path d='M0.6 4.5 H 21.4'/><path d='M7.2 4.3 V 1.3 H 14.4 V 4.3'/>
<path d='M3.2 4.5 V 20.6 H 18.6 V 4.5'/>
<path d='M8.6 8.2 V 16.4 M13.4 8.2 V 16.4' stroke-width='1.3'/>
</g></svg>
<svg style='position:absolute;left:612px;top:732px' width='20' height='20' viewBox='0 0 20 20'><g fill='#409eff'><rect x='1' y='8.2' width='4.5' height='10.6'/><rect x='7.7' y='1' width='4.4' height='17.8'/><rect x='14.2' y='5.2' width='4.6' height='13.6'/></g></svg>
<div style='position:absolute;left:632.5px;top:721.7px;width:280px;height:40px;line-height:40px;text-align:center;font-size:21px;color:#606266;white-space:nowrap;'>雨量站2</div>
<div style='position:absolute;left:835.5px;top:721.7px;width:280px;height:40px;line-height:40px;text-align:center;font-size:21px;color:#606266;white-space:nowrap;'>3366aaii99</div>
<div style='position:absolute;left:1000.5px;top:721.7px;width:280px;height:40px;line-height:40px;text-align:center;font-size:21px;color:#606266;white-space:nowrap;'>水库站</div>
<div style='position:absolute;left:1188.0px;top:721.7px;width:280px;height:40px;line-height:40px;text-align:center;font-size:21px;color:#606266;white-space:nowrap;'>AL1000</div>
<div style='position:absolute;left:1460px;top:721.7px;height:40px;line-height:40px;font-size:21px;color:#606266;white-space:nowrap;'>水位协议HE…</div>
<div style='position:absolute;left:1615.2px;top:721.7px;width:280px;height:40px;line-height:40px;text-align:center;font-size:21px;color:#606266;white-space:nowrap;'>2024-09-10 11:46:07</div>
<div style='position:absolute;left:347px;top:831px;width:1837px;height:1px;background:#ebeef5'></div>
<div style='position:absolute;left:384px;top:795.4px;width:13px;height:13.0px;background:#999;border-radius:50%'></div>
<svg style='position:absolute;left:464px;top:790px' width='22' height='23' viewBox='0 0 22 23'><g fill='none' stroke='#409eff' stroke-width='1.5'>
<ellipse cx='11.4' cy='9.4' rx='9' ry='6.1' transform='rotate(45 11.4 9.4)'/>
<path d='M3.4 9.8 C 4.6 13.6 9 17.6 14.6 17.8' stroke-width='1.4'/>
<path d='M10.3 11.4 L16.8 5'/><circle cx='18.3' cy='3.6' r='1.3' stroke-width='1.7'/>
<path d='M4.3 12.8 L1.5 21.2 H 8.8 V 17.8 M3.4 15.9 L 9.4 16.9 M 2.8 18.4 L 7.2 21' stroke-width='1.4'/>
</g></svg>
<svg style='position:absolute;left:512px;top:792px' width='21' height='21' viewBox='0 0 21 21'><g fill='none' stroke='#409eff' stroke-width='1.55'>
<path d='M10.5 1.8 H 1.9 V 17.9 H 18.2 V 9.5'/>
<rect x='6.4' y='5.25' width='14.1' height='2.4' rx='1.2' transform='rotate(-44 13.45 6.45)' stroke-width='1.5'/>
</g></svg>
<svg style='position:absolute;left:561px;top:790px' width='22' height='22' viewBox='0 0 22 22'><g fill='none' stroke='#f56c6c' stroke-width='1.5'>
<path d='M0.6 4.5 H 21.4'/><path d='M7.2 4.3 V 1.3 H 14.4 V 4.3'/>
<path d='M3.2 4.5 V 20.6 H 18.6 V 4.5'/>
<path d='M8.6 8.2 V 16.4 M13.4 8.2 V 16.4' stroke-width='1.3'/>
</g></svg>
<svg style='position:absolute;left:612px;top:792px' width='20' height='20' viewBox='0 0 20 20'><g fill='#409eff'><rect x='1' y='8.2' width='4.5' height='10.6'/><rect x='7.7' y='1' width='4.4' height='17.8'/><rect x='14.2' y='5.2' width='4.6' height='13.6'/></g></svg>
<div style='position:absolute;left:632.5px;top:781.2px;width:280px;height:40px;line-height:40px;text-align:center;font-size:21px;color:#606266;white-space:nowrap;'>测试（cxm）</div>
<div style='position:absolute;left:835.5px;top:781.2px;width:280px;height:40px;line-height:40px;text-align:center;font-size:21px;color:#606266;white-space:nowrap;'>0066778899</div>
<div style='position:absolute;left:1000.5px;top:781.2px;width:280px;height:40px;line-height:40px;text-align:center;font-size:21px;color:#606266;white-space:nowrap;'>降水站</div>
<div style='position:absolute;left:1188.0px;top:781.2px;width:280px;height:40px;line-height:40px;text-align:center;font-size:21px;color:#606266;white-space:nowrap;'>AL1000</div>
<div style='position:absolute;left:1460px;top:781.2px;height:40px;line-height:40px;font-size:21px;color:#606266;white-space:nowrap;'>水位协议HE…</div>
<div style='position:absolute;left:1615.2px;top:781.2px;width:280px;height:40px;line-height:40px;text-align:center;font-size:21px;color:#606266;white-space:nowrap;'>2024-09-13 10:57:04</div>
<div style='position:absolute;left:1885.5px;top:781.2px;width:280px;height:40px;line-height:40px;text-align:center;font-size:21px;color:#606266;white-space:nowrap;'>2024-10-15 16:19:19</div>
<div style='position:absolute;left:347px;top:891px;width:1837px;height:1px;background:#ebeef5'></div>
<div style='position:absolute;left:384px;top:854.9px;width:13px;height:13.0px;background:#999;border-radius:50%'></div>
<svg style='position:absolute;left:464px;top:850px' width='22' height='23' viewBox='0 0 22 23'><g fill='none' stroke='#409eff' stroke-width='1.5'>
<ellipse cx='11.4' cy='9.4' rx='9' ry='6.1' transform='rotate(45 11.4 9.4)'/>
<path d='M3.4 9.8 C 4.6 13.6 9 17.6 14.6 17.8' stroke-width='1.4'/>
<path d='M10.3 11.4 L16.8 5'/><circle cx='18.3' cy='3.6' r='1.3' stroke-width='1.7'/>
<path d='M4.3 12.8 L1.5 21.2 H 8.8 V 17.8 M3.4 15.9 L 9.4 16.9 M 2.8 18.4 L 7.2 21' stroke-width='1.4'/>
</g></svg>
<svg style='position:absolute;left:512px;top:851px' width='21' height='21' viewBox='0 0 21 21'><g fill='none' stroke='#409eff' stroke-width='1.55'>
<path d='M10.5 1.8 H 1.9 V 17.9 H 18.2 V 9.5'/>
<rect x='6.4' y='5.25' width='14.1' height='2.4' rx='1.2' transform='rotate(-44 13.45 6.45)' stroke-width='1.5'/>
</g></svg>
<svg style='position:absolute;left:561px;top:850px' width='22' height='22' viewBox='0 0 22 22'><g fill='none' stroke='#f56c6c' stroke-width='1.5'>
<path d='M0.6 4.5 H 21.4'/><path d='M7.2 4.3 V 1.3 H 14.4 V 4.3'/>
<path d='M3.2 4.5 V 20.6 H 18.6 V 4.5'/>
<path d='M8.6 8.2 V 16.4 M13.4 8.2 V 16.4' stroke-width='1.3'/>
</g></svg>
<svg style='position:absolute;left:612px;top:851px' width='20' height='20' viewBox='0 0 20 20'><g fill='#409eff'><rect x='1' y='8.2' width='4.5' height='10.6'/><rect x='7.7' y='1' width='4.4' height='17.8'/><rect x='14.2' y='5.2' width='4.6' height='13.6'/></g></svg>
<div style='position:absolute;left:632.5px;top:840.7px;width:280px;height:40px;line-height:40px;text-align:center;font-size:21px;color:#606266;white-space:nowrap;'>1号</div>
<div style='position:absolute;left:835.5px;top:840.7px;width:280px;height:40px;line-height:40px;text-align:center;font-size:21px;color:#606266;white-space:nowrap;'>7701300006</div>
<div style='position:absolute;left:1000.5px;top:840.7px;width:280px;height:40px;line-height:40px;text-align:center;font-size:21px;color:#606266;white-space:nowrap;'>降水站</div>
<div style='position:absolute;left:1188.0px;top:840.7px;width:280px;height:40px;line-height:40px;text-align:center;font-size:21px;color:#606266;white-space:nowrap;'>AL1000</div>
<div style='position:absolute;left:1460px;top:840.7px;height:40px;line-height:40px;font-size:21px;color:#606266;white-space:nowrap;'>水位协议HE…</div>
<div style='position:absolute;left:1615.2px;top:840.7px;width:280px;height:40px;line-height:40px;text-align:center;font-size:21px;color:#606266;white-space:nowrap;'>2024-09-05 11:02:43</div>
<div style='position:absolute;left:1885.5px;top:840.7px;width:280px;height:40px;line-height:40px;text-align:center;font-size:21px;color:#606266;white-space:nowrap;'>2024-09-05 12:00:06</div>
<div style='position:absolute;left:347px;top:950px;width:1837px;height:1px;background:#ebeef5'></div>
<div style='position:absolute;left:384px;top:914.4px;width:13px;height:13.0px;background:#999;border-radius:50%'></div>
<svg style='position:absolute;left:464px;top:910px' width='22' height='23' viewBox='0 0 22 23'><g fill='none' stroke='#409eff' stroke-width='1.5'>
<ellipse cx='11.4' cy='9.4' rx='9' ry='6.1' transform='rotate(45 11.4 9.4)'/>
<path d='M3.4 9.8 C 4.6 13.6 9 17.6 14.6 17.8' stroke-width='1.4'/>
<path d='M10.3 11.4 L16.8 5'/><circle cx='18.3' cy='3.6' r='1.3' stroke-width='1.7'/>
<path d='M4.3 12.8 L1.5 21.2 H 8.8 V 17.8 M3.4 15.9 L 9.4 16.9 M 2.8 18.4 L 7.2 21' stroke-width='1.4'/>
</g></svg>
<svg style='position:absolute;left:512px;top:910px' width='21' height='21' viewBox='0 0 21 21'><g fill='none' stroke='#409eff' stroke-width='1.55'>
<path d='M10.5 1.8 H 1.9 V 17.9 H 18.2 V 9.5'/>
<rect x='6.4' y='5.25' width='14.1' height='2.4' rx='1.2' transform='rotate(-44 13.45 6.45)' stroke-width='1.5'/>
</g></svg>
<svg style='position:absolute;left:561px;top:910px' width='22' height='22' viewBox='0 0 22 22'><g fill='none' stroke='#f56c6c' stroke-width='1.5'>
<path d='M0.6 4.5 H 21.4'/><path d='M7.2 4.3 V 1.3 H 14.4 V 4.3'/>
<path d='M3.2 4.5 V 20.6 H 18.6 V 4.5'/>
<path d='M8.6 8.2 V 16.4 M13.4 8.2 V 16.4' stroke-width='1.3'/>
</g></svg>
<svg style='position:absolute;left:612px;top:910px' width='20' height='20' viewBox='0 0 20 20'><g fill='#409eff'><rect x='1' y='8.2' width='4.5' height='10.6'/><rect x='7.7' y='1' width='4.4' height='17.8'/><rect x='14.2' y='5.2' width='4.6' height='13.6'/></g></svg>
<div style='position:absolute;left:632.5px;top:900.2px;width:280px;height:40px;line-height:40px;text-align:center;font-size:21px;color:#606266;white-space:nowrap;'>EMC2号</div>
<div style='position:absolute;left:835.5px;top:900.2px;width:280px;height:40px;line-height:40px;text-align:center;font-size:21px;color:#606266;white-space:nowrap;'>721F980042</div>
<div style='position:absolute;left:1000.5px;top:900.2px;width:280px;height:40px;line-height:40px;text-align:center;font-size:21px;color:#606266;white-space:nowrap;'>降水站</div>
<div style='position:absolute;left:1188.0px;top:900.2px;width:280px;height:40px;line-height:40px;text-align:center;font-size:21px;color:#606266;white-space:nowrap;'>AL1000</div>
<div style='position:absolute;left:1460px;top:900.2px;height:40px;line-height:40px;font-size:21px;color:#606266;white-space:nowrap;'>水位协议HE…</div>
<div style='position:absolute;left:1615.2px;top:900.2px;width:280px;height:40px;line-height:40px;text-align:center;font-size:21px;color:#606266;white-space:nowrap;'>2024-09-06 17:16:40</div>
<div style='position:absolute;left:1885.5px;top:900.2px;width:280px;height:40px;line-height:40px;text-align:center;font-size:21px;color:#606266;white-space:nowrap;'>2024-09-06 18:00:04</div>
<div style='position:absolute;left:347px;top:1010px;width:1837px;height:1px;background:#ebeef5'></div>
<div style='position:absolute;left:384px;top:973.9px;width:13px;height:13.0px;background:#999;border-radius:50%'></div>
<svg style='position:absolute;left:464px;top:969px' width='22' height='23' viewBox='0 0 22 23'><g fill='none' stroke='#409eff' stroke-width='1.5'>
<ellipse cx='11.4' cy='9.4' rx='9' ry='6.1' transform='rotate(45 11.4 9.4)'/>
<path d='M3.4 9.8 C 4.6 13.6 9 17.6 14.6 17.8' stroke-width='1.4'/>
<path d='M10.3 11.4 L16.8 5'/><circle cx='18.3' cy='3.6' r='1.3' stroke-width='1.7'/>
<path d='M4.3 12.8 L1.5 21.2 H 8.8 V 17.8 M3.4 15.9 L 9.4 16.9 M 2.8 18.4 L 7.2 21' stroke-width='1.4'/>
</g></svg>
<svg style='position:absolute;left:512px;top:970px' width='21' height='21' viewBox='0 0 21 21'><g fill='none' stroke='#409eff' stroke-width='1.55'>
<path d='M10.5 1.8 H 1.9 V 17.9 H 18.2 V 9.5'/>
<rect x='6.4' y='5.25' width='14.1' height='2.4' rx='1.2' transform='rotate(-44 13.45 6.45)' stroke-width='1.5'/>
</g></svg>
<svg style='position:absolute;left:561px;top:969px' width='22' height='22' viewBox='0 0 22 22'><g fill='none' stroke='#f56c6c' stroke-width='1.5'>
<path d='M0.6 4.5 H 21.4'/><path d='M7.2 4.3 V 1.3 H 14.4 V 4.3'/>
<path d='M3.2 4.5 V 20.6 H 18.6 V 4.5'/>
<path d='M8.6 8.2 V 16.4 M13.4 8.2 V 16.4' stroke-width='1.3'/>
</g></svg>
<svg style='position:absolute;left:612px;top:970px' width='20' height='20' viewBox='0 0 20 20'><g fill='#409eff'><rect x='1' y='8.2' width='4.5' height='10.6'/><rect x='7.7' y='1' width='4.4' height='17.8'/><rect x='14.2' y='5.2' width='4.6' height='13.6'/></g></svg>
<div style='position:absolute;left:632.5px;top:959.7px;width:280px;height:40px;line-height:40px;text-align:center;font-size:21px;color:#606266;white-space:nowrap;'>0020241015</div>
<div style='position:absolute;left:835.5px;top:959.7px;width:280px;height:40px;line-height:40px;text-align:center;font-size:21px;color:#606266;white-space:nowrap;'>0020241015</div>
<div style='position:absolute;left:1000.5px;top:959.7px;width:280px;height:40px;line-height:40px;text-align:center;font-size:21px;color:#606266;white-space:nowrap;'>水库站</div>
<div style='position:absolute;left:1188.0px;top:959.7px;width:280px;height:40px;line-height:40px;text-align:center;font-size:21px;color:#606266;white-space:nowrap;'>AL1000</div>
<div style='position:absolute;left:1460px;top:959.7px;height:40px;line-height:40px;font-size:21px;color:#606266;white-space:nowrap;'>水位协议HE…</div>
<div style='position:absolute;left:1615.2px;top:959.7px;width:280px;height:40px;line-height:40px;text-align:center;font-size:21px;color:#606266;white-space:nowrap;'>2024-10-15 10:58:40</div>
<div style='position:absolute;left:1885.5px;top:959.7px;width:280px;height:40px;line-height:40px;text-align:center;font-size:21px;color:#606266;white-space:nowrap;'>2024-11-21 20:00:49</div>
<div style='position:absolute;left:384px;top:1033.4px;width:13px;height:13.0px;background:#999;border-radius:50%'></div>
<svg style='position:absolute;left:464px;top:1028px' width='22' height='23' viewBox='0 0 22 23'><g fill='none' stroke='#409eff' stroke-width='1.5'>
<ellipse cx='11.4' cy='9.4' rx='9' ry='6.1' transform='rotate(45 11.4 9.4)'/>
<path d='M3.4 9.8 C 4.6 13.6 9 17.6 14.6 17.8' stroke-width='1.4'/>
<path d='M10.3 11.4 L16.8 5'/><circle cx='18.3' cy='3.6' r='1.3' stroke-width='1.7'/>
<path d='M4.3 12.8 L1.5 21.2 H 8.8 V 17.8 M3.4 15.9 L 9.4 16.9 M 2.8 18.4 L 7.2 21' stroke-width='1.4'/>
</g></svg>
<svg style='position:absolute;left:512px;top:1030px' width='21' height='21' viewBox='0 0 21 21'><g fill='none' stroke='#409eff' stroke-width='1.55'>
<path d='M10.5 1.8 H 1.9 V 17.9 H 18.2 V 9.5'/>
<rect x='6.4' y='5.25' width='14.1' height='2.4' rx='1.2' transform='rotate(-44 13.45 6.45)' stroke-width='1.5'/>
</g></svg>
<svg style='position:absolute;left:561px;top:1028px' width='22' height='22' viewBox='0 0 22 22'><g fill='none' stroke='#f56c6c' stroke-width='1.5'>
<path d='M0.6 4.5 H 21.4'/><path d='M7.2 4.3 V 1.3 H 14.4 V 4.3'/>
<path d='M3.2 4.5 V 20.6 H 18.6 V 4.5'/>
<path d='M8.6 8.2 V 16.4 M13.4 8.2 V 16.4' stroke-width='1.3'/>
</g></svg>
<svg style='position:absolute;left:612px;top:1030px' width='20' height='20' viewBox='0 0 20 20'><g fill='#409eff'><rect x='1' y='8.2' width='4.5' height='10.6'/><rect x='7.7' y='1' width='4.4' height='17.8'/><rect x='14.2' y='5.2' width='4.6' height='13.6'/></g></svg>
<div style='position:absolute;left:680px;top:1019.2px;height:40px;line-height:40px;font-size:21px;color:#606266;white-space:nowrap;'>系统测试（过用1…</div>
<div style='position:absolute;left:835.5px;top:1019.2px;width:280px;height:40px;line-height:40px;text-align:center;font-size:21px;color:#606266;white-space:nowrap;'>0012345678</div>
<div style='position:absolute;left:1000.5px;top:1019.2px;width:280px;height:40px;line-height:40px;text-align:center;font-size:21px;color:#606266;white-space:nowrap;'>河道站</div>
<div style='position:absolute;left:1188.0px;top:1019.2px;width:280px;height:40px;line-height:40px;text-align:center;font-size:21px;color:#606266;white-space:nowrap;'>AL1000</div>
<div style='position:absolute;left:1460px;top:1019.2px;height:40px;line-height:40px;font-size:21px;color:#606266;white-space:nowrap;'>水位协议HE…</div>
<div style='position:absolute;left:1615.2px;top:1019.2px;width:280px;height:40px;line-height:40px;text-align:center;font-size:21px;color:#606266;white-space:nowrap;'>2024-09-12 16:20:27</div>
<div style='position:absolute;left:1885.5px;top:1019.2px;width:280px;height:40px;line-height:40px;text-align:center;font-size:21px;color:#606266;white-space:nowrap;'>2025-02-27 13:58:52</div>
<div style='position:absolute;left:2182px;top:502px;width:2px;height:3px;background:#666'></div>
<div style='position:absolute;left:2183px;top:731px;width:1px;height:20px;background:#777'></div>
<div style='position:absolute;left:2180px;top:736px;width:4px;height:1px;background:#777'></div>
<div style='position:absolute;left:2172px;top:359px;width:9px;height:562px;background:rgba(144,147,153,.3);border-radius:5px'></div>
<div style='position:absolute;left:350px;top:1058px;width:1707px;height:9px;background:rgba(144,147,153,.3);border-radius:5px'></div>
<div style='position:absolute;left:347px;top:1069px;width:1837px;height:1px;background:#ebeef5'></div>
<div style='position:absolute;left:346px;top:1070px;width:1839px;height:1px;background:#e5e5e5'></div>
<div style='position:absolute;left:353.5px;top:1082.5px;height:40px;line-height:40px;font-size:18px;color:#606266;white-space:nowrap;'>共 18 条</div>
<div style='position:absolute;left:444px;top:1086px;width:150px;height:36px;border:1px solid #dcdfe6;border-radius:5px;box-sizing:border-box'></div>
<div style='position:absolute;left:456.5px;top:1084.0px;height:40px;line-height:40px;font-size:18px;color:#606266;white-space:nowrap;'>15条/页</div>
<svg style='position:absolute;left:561px;top:1097px' width='20' height='13' viewBox='0 0 20 13'><path d='M2.5 2.5 L10 10 L17.5 2.5' fill='none' stroke='#a8abb2' stroke-width='1.3'/></svg>
<div style='position:absolute;left:618px;top:1086px;width:36px;height:36px;background:#f4f4f5;border-radius:3px'></div>
<svg style='position:absolute;left:626px;top:1094px' width='20' height='20' viewBox='0 0 20 20'><path d='M13 3 L6.5 10 L13 17' fill='none' stroke='#a8abb2' stroke-width='1.4'/></svg>
<div style='position:absolute;left:666px;top:1086px;width:36px;height:36px;background:#409eff;border-radius:3px'></div>
<div style='position:absolute;left:666.0px;top:1084.0px;width:36px;height:40px;line-height:40px;text-align:center;font-size:19.5px;color:#fff;white-space:nowrap;-webkit-text-stroke:0.7px #fff'>1</div>
<div style='position:absolute;left:714px;top:1086px;width:36px;height:36px;background:#f4f4f5;border-radius:3px'></div>
<div style='position:absolute;left:714.0px;top:1084.0px;width:36px;height:40px;line-height:40px;text-align:center;font-size:19.5px;color:#303133;white-space:nowrap;-webkit-text-stroke:0.35px #303133'>2</div>
<div style='position:absolute;left:762px;top:1086px;width:36px;height:36px;background:#f4f4f5;border-radius:3px'></div>
<svg style='position:absolute;left:770px;top:1094px' width='20' height='20' viewBox='0 0 20 20'><path d='M7 3 L13.5 10 L7 17' fill='none' stroke='#303133' stroke-width='1.4'/></svg>
<div style='position:absolute;left:828px;top:1082.5px;height:40px;line-height:40px;font-size:18px;color:#606266;white-space:nowrap;'>前往</div>
<div style='position:absolute;left:876px;top:1086px;width:83px;height:36px;border:1px solid #dcdfe6;border-radius:5px;box-sizing:border-box'></div>
<div style='position:absolute;left:877.5px;top:1083.0px;width:80px;height:40px;line-height:40px;text-align:center;font-size:18px;color:#606266;white-space:nowrap;'>1</div>
<div style='position:absolute;left:971.5px;top:1082.5px;height:40px;line-height:40px;font-size:18px;color:#606266;white-space:nowrap;'>页</div>
</div></body></html>
